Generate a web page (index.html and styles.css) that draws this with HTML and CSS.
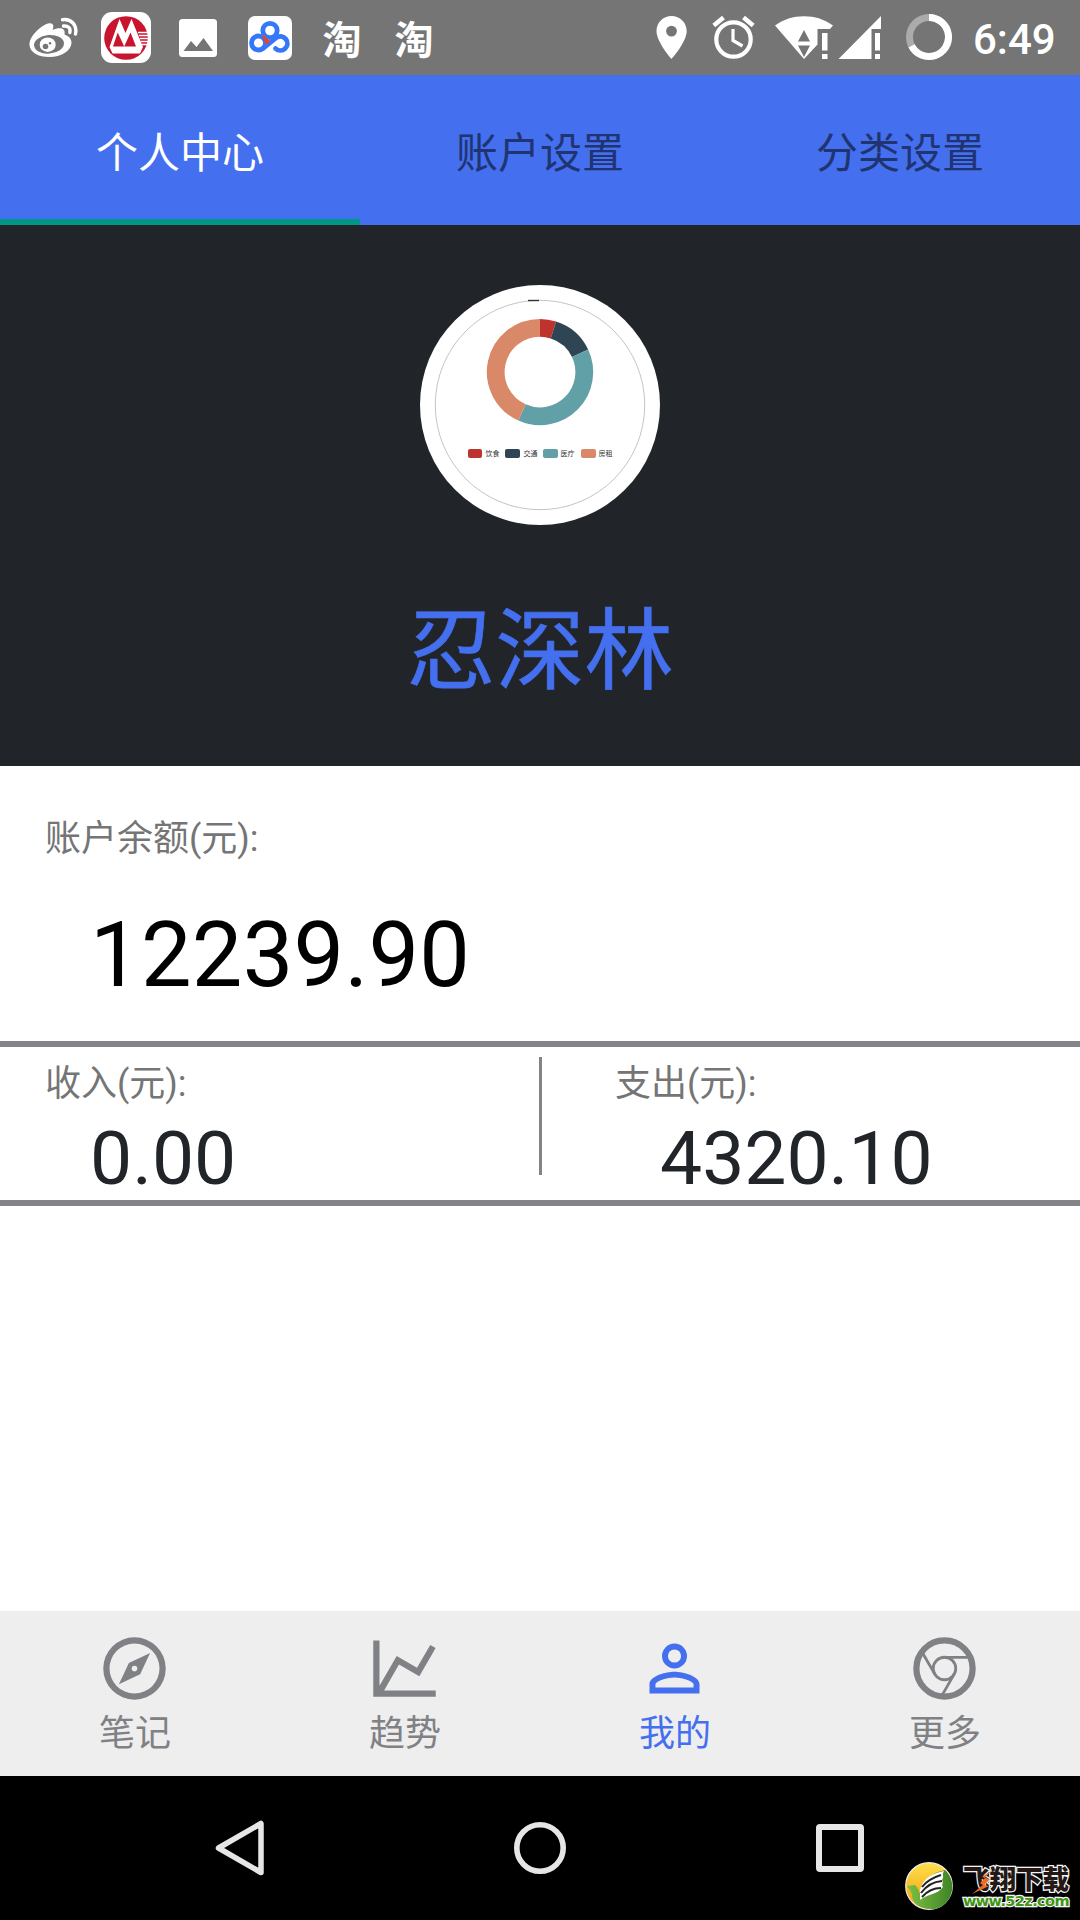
FILE: index.html
```html
<!DOCTYPE html>
<html lang="zh-CN">
<head>
    <meta charset="UTF-8">
    <meta name="viewport" content="width=device-width, initial-scale=1.0">
    <title>个人中心</title>
    <link rel="stylesheet" href="styles.css">
</head>
<body>
    <div class="screen">
        <header class="status-bar">
            <div class="notifications">
                <!-- weibo -->
                <svg viewBox="18 0 72 75">
                    <path fill="#fff" d="M29.500 45C29 37 40 26 48 23.500C53 22 54.500 25.500 52.500 30C59 27 66 27.500 64.500 34.500C69 36 71.500 39 71.500 43C71 51 61 57 49.500 57C38 57 30 52.500 29.500 45Z"/>
                    <ellipse cx="49" cy="44.300" rx="15" ry="9.300" fill="#757575" transform="rotate(-5 49 44.300)"/>
                    <ellipse cx="47.700" cy="44.700" rx="8" ry="7.200" fill="#fff"/>
                    <circle cx="45.500" cy="46.500" r="2.800" fill="#757575"/>
                    <circle cx="50" cy="43.300" r="1.200" fill="#757575"/>
                    <path fill="none" stroke="#fff" stroke-width="3.400" stroke-linecap="round" d="M62.500 19.700C71 18.500 77.500 25 75.500 34M63.500 26C68 25.500 71 28 69.800 32.500"/>
                </svg>
                <!-- bank -->
                <svg viewBox="90 0 72 75">
                    <rect x="101" y="12" width="50" height="51" rx="11" fill="#fff"/>
                    <circle cx="126" cy="38" r="21.800" fill="#c8152d"/>
                    <path fill="#fff" d="M119.500 19L125.500 33L131.500 19L143 47L140 53.500H112.500L109.500 47Z"/>
                    <path fill="#c8152d" d="M113 46.500L117.700 32.500L124.200 46.500L130.500 32.500L136 46.500Z"/>
                    <path stroke="#fff" stroke-width="1.300" d="M138 32.500H148M139 35.500H148M140 38.500H148M141 41.500H148M142 44.500H148"/>
                </svg>
                <!-- gallery -->
                <svg viewBox="162 0 72 75">
                    <rect x="179" y="19" width="38" height="38" rx="3.500" fill="#fff"/>
                    <path fill="#757575" d="M183.500 51L191 41L196.500 47L203.500 38L213 51Z"/>
                </svg>
                <!-- cloud disk -->
                <svg viewBox="234 0 72 75">
                    <rect x="248" y="16" width="44" height="44" rx="7" fill="#fff"/>
                    <g fill="none" stroke="#3478fa" stroke-width="4.800">
                        <circle cx="270" cy="30.500" r="7.200"/>
                        <circle cx="258.500" cy="43" r="7"/>
                        <path d="M263 48.500L276 38A7 7 0 1 1 275.500 48.500" stroke-linecap="round"/>
                    </g>
                    <path fill="#d8483c" d="M263.500 34.500L270.500 41.500L266 45L262.500 37.500Z"/>
                </svg>
                <span class="taobao">淘</span>
                <span class="taobao">淘</span>
            </div>
            <div class="system">
                <svg class="icon-pin" viewBox="656 0 32 75">
                    <path fill="#fff" fill-rule="evenodd" d="M671.500 16C663 16 656.500 22.700 656.500 31C656.500 42 671.500 59 671.500 59S686.700 42 686.700 31C686.700 22.700 680 16 671.500 16ZM671.500 25.700A5.400 5.400 0 1 1 671.500 36.500A5.400 5.400 0 0 1 671.500 25.700Z"/>
                </svg>
                <svg class="icon-alarm" viewBox="712 0 44 75">
                    <g fill="none" stroke="#fff">
                        <circle cx="733.500" cy="39.500" r="17.200" stroke-width="4.200"/>
                        <path stroke-width="3.200" d="M733 29V40.500L742.500 46"/>
                        <path stroke-width="4.500" d="M713.800 25.500L723.500 17.500M743.500 17.500L753.200 25.500"/>
                    </g>
                </svg>
                <svg class="icon-wifi" viewBox="774 0 60 75">
                    <path fill="#fff" d="M775 25.500C791 13 817 13 833 25.500L830 29H817.500V44.500L804 59Z"/>
                    <path fill="#757575" d="M798 41.500L804 30L810 41.500ZM798 45.500H810L804 57Z"/>
                    <path fill="#fff" d="M822 33H827.500V50.500H822ZM822 54H827.500V59H822Z"/>
                </svg>
                <svg class="icon-signal" viewBox="838 0 44 75">
                    <path fill="#fff" d="M881 16V29H871.500V59H838.500ZM875 33H880V50.500H875ZM875 54H880V59H875Z"/>
                </svg>
                <svg class="icon-ring" viewBox="905 0 48 75">
                    <circle cx="929" cy="37" r="19.500" fill="none" stroke="#ababab" stroke-width="7"/>
                    <path fill="none" stroke="#fff" stroke-width="7" d="M929 17.500A19.500 19.500 0 1 1 911.600 45.800"/>
                </svg>
                <span class="clock">6:49</span>
            </div>
        </header>

        <nav class="tabs">
            <a class="tab active">个人中心</a>
            <a class="tab">账户设置</a>
            <a class="tab">分类设置</a>
        </nav>

        <section class="profile">
            <div class="avatar">
                <svg viewBox="0 0 240 240">
                    <circle cx="120" cy="120" r="104.700" fill="none" stroke="#c4c4c4" stroke-width="1"/>
                    <path d="M108 15.500H119" stroke="#333" stroke-width="1.400"/>
                    <g fill="none" stroke-width="17.800">
                        <path stroke="#bf332e" d="M120 42.800A44.200 44.200 0 0 1 133.400 44.900"/>
                        <path stroke="#304553" d="M133.400 44.900A44.200 44.200 0 0 1 160.100 68.300"/>
                        <path stroke="#61a0a6" d="M160.100 68.300A44.200 44.200 0 0 1 102 127.400"/>
                        <path stroke="#d98868" d="M102 127.400A44.200 44.200 0 0 1 120 42.800"/>
                    </g>
                    <rect x="48" y="164" width="14" height="9" rx="2" fill="#bf332e"/>
                    <rect x="85" y="164" width="15" height="9" rx="2" fill="#304553"/>
                    <rect x="123" y="164" width="15" height="9" rx="2" fill="#61a0a6"/>
                    <rect x="161" y="164" width="15" height="9" rx="2" fill="#d98868"/>
                    <g class="legend">
                        <text x="65.500" y="171">饮食</text>
                        <text x="103.500" y="171">交通</text>
                        <text x="140.500" y="171">医疗</text>
                        <text x="178.500" y="171">房租</text>
                    </g>
                </svg>
            </div>
            <h1 class="username">忍深林</h1>
        </section>

        <section class="balance">
            <div class="label">账户余额(元):</div>
            <div class="amount">12239.90</div>
        </section>

        <section class="summary">
            <div class="income">
                <div class="label">收入(元):</div>
                <div class="value">0.00</div>
            </div>
            <div class="separator"></div>
            <div class="expense">
                <div class="label">支出(元):</div>
                <div class="value">4320.10</div>
            </div>
        </section>

        <nav class="bottom-nav">
            <a class="nav-item">
                <svg viewBox="0 0 24 24"><path d="M7 17L10.200 10.200L17 7L13.800 13.800L7 17M12 11.100A.9.9 0 0 0 11.100 12A.9.9 0 0 0 12 12.900A.9.9 0 0 0 12.900 12A.9.9 0 0 0 12 11.100M12 2A10 10 0 0 1 22 12A10 10 0 0 1 12 22A10 10 0 0 1 2 12A10 10 0 0 1 12 2M12 4A8 8 0 0 0 4 12A8 8 0 0 0 12 20A8 8 0 0 0 20 12A8 8 0 0 0 12 4Z"/></svg>
                <span>笔记</span>
            </a>
            <a class="nav-item">
                <svg viewBox="0 0 24 24"><path d="M16 11.780L20.240 4.450L21.970 5.450L16.740 14.500L10.230 10.750L5.460 19H22V21H2V3H4V17.540L9.500 8L16 11.780Z"/></svg>
                <span>趋势</span>
            </a>
            <a class="nav-item active">
                <svg viewBox="0 0 24 24"><path d="M12 13C9.330 13 4 14.330 4 17V20H20V17C20 14.330 14.670 13 12 13M12 4A4 4 0 0 0 8 8A4 4 0 0 0 12 12A4 4 0 0 0 16 8A4 4 0 0 0 12 4M12 14.900C14.970 14.900 18.100 16.360 18.100 17V18.100H5.900V17C5.900 16.360 9 14.900 12 14.900M12 5.900A2.100 2.100 0 0 1 14.100 8A2.100 2.100 0 0 1 12 10.100A2.100 2.100 0 0 1 9.900 8A2.100 2.100 0 0 1 12 5.900Z"/></svg>
                <span>我的</span>
            </a>
            <a class="nav-item">
                <svg class="outline" viewBox="0 0 24 24">
                    <circle cx="12" cy="12" r="9" stroke-width="2"/>
                    <circle cx="12" cy="12" r="3.600"/>
                    <path d="M12 8.450H20M15.100 13.800L11.200 20.600M8.900 13.800L4.900 6.900"/>
                </svg>
                <span>更多</span>
            </a>
        </nav>

        <footer class="system-nav">
            <svg viewBox="0 0 60 60"><path d="M51 5.500V54.500L8.500 30Z" stroke-width="5.500" stroke-linejoin="round"/></svg>
            <svg viewBox="0 0 60 60"><circle cx="30" cy="30" r="23.200" stroke-width="5.600"/></svg>
            <svg viewBox="0 0 60 60"><rect x="9" y="9" width="42" height="42" rx="1" stroke-width="6"/></svg>

            <div class="watermark">
                <svg viewBox="0 0 48 48">
                    <defs>
                        <linearGradient id="sun" x1="0" y1="0" x2="0" y2="1">
                            <stop offset="0" stop-color="#ffe04a"/>
                            <stop offset="1" stop-color="#f39a12"/>
                        </linearGradient>
                        <linearGradient id="leaf" x1="0" y1="0" x2="1" y2="0">
                            <stop offset="0" stop-color="#7cc142"/>
                            <stop offset="1" stop-color="#3f8427"/>
                        </linearGradient>
                    </defs>
                    <circle cx="24" cy="24" r="23.300" fill="url(#sun)" stroke="#eee" stroke-width="1.200"/>
                    <path fill="url(#leaf)" d="M40 8C53 20 48 43 30 47C16 48 7 41 7 34C7 29 2 25 2 24L10 23C15 28 13 31 15 31C16 20 25 11 40 8Z"/>
                    <path fill="#fff" d="M15 28C18 16 28 11 39 9C36 15 40 12 37 18C39 20 36 23 38 25C32 33 24 31 15 38Z"/>
                    <path fill="none" stroke="#222" stroke-width="2" d="M17 25Q23 17 36 13M16 31Q24 20 37 19M17 35Q25 26 36 26"/>
                </svg>
                <div class="watermark-text">
                    <span class="site-name">飞翔下载</span>
                    <span class="site-url">www.52z.com</span>
                </div>
                <svg class="spark" viewBox="0 0 24 26"><path fill="#f36b21" d="M20 2L14 9L19 10L13 16L18 17L1 25L12 16L9 14L14 9L11 8Z"/></svg>
            </div>
        </footer>
    </div>
</body>
</html>
```

FILE: styles.css
```css
:root {
    --primary-color: #446fee;
    --dark-color: #212529;
    --line-color: #838488;
    --label-color: #757575;
    --icon-color: #808185;
}

* {
    margin: 0;
    padding: 0;
    box-sizing: border-box;
}

body {
    background-color: white;
    font-family: Roboto, "Noto Sans CJK SC", sans-serif;
}

svg {
    display: block;
}

.screen {
    display: flex;
    flex-direction: column;
    width: 1080px;
    height: 1920px;
    overflow: hidden;
}

/* Status bar */
.status-bar {
    display: flex;
    justify-content: space-between;
    height: 75px;
    padding: 0 24px 0 18px;
    background-color: #757575;
    color: white;
}

.notifications {
    display: flex;
}

.notifications svg {
    width: 72px;
    height: 75px;
}

.taobao {
    width: 72px;
    font-family: "Noto Sans CJK SC", sans-serif;
    font-size: 39px;
    font-weight: 700;
    line-height: 75px;
    text-align: center;
}

.system {
    display: flex;
}

.system svg {
    height: 75px;
}

.icon-pin {
    width: 32px;
    margin-right: 24px;
}

.icon-alarm {
    width: 44px;
    margin-right: 18px;
}

.icon-wifi {
    width: 60px;
    margin-right: 4px;
}

.icon-signal {
    width: 44px;
    margin-right: 23px;
}

.icon-ring {
    width: 48px;
    margin-right: 20px;
}

.clock {
    width: 83px;
    font-size: 42px;
    font-weight: 500;
    line-height: 80px;
    white-space: nowrap;
}

/* Top tabs */
.tabs {
    display: flex;
    height: 150px;
    background-color: var(--primary-color);
}

.tab {
    flex: 1;
    border-bottom: 6px solid transparent;
    color: #203471;
    font-size: 42px;
    line-height: 157px;
    text-align: center;
}

.tab.active {
    border-bottom-color: #009688;
    color: white;
}

/* Profile */
.profile {
    display: flex;
    flex-direction: column;
    align-items: center;
    height: 541px;
    padding-top: 60px;
    background-color: var(--dark-color);
}

.avatar {
    width: 240px;
    height: 240px;
    border-radius: 50%;
    background-color: white;
}

.legend {
    fill: #333;
    font-size: 7px;
}

.username {
    margin-top: 62px;
    color: var(--primary-color);
    font-size: 89px;
    font-weight: 400;
    line-height: 130px;
    -webkit-text-stroke: 0.7px var(--primary-color);
}

/* Money */
.label {
    color: var(--label-color);
    font-size: 36px;
    line-height: 48px;
}

.balance {
    height: 281px;
    padding: 49px 45px 0;
    border-bottom: 6px solid var(--line-color);
}

.amount {
    padding: 40px 0 0 45px;
    color: black;
    font-size: 90px;
    letter-spacing: 0.3px;
    line-height: 106px;
}

.summary {
    display: flex;
    height: 159px;
    border-bottom: 6px solid var(--line-color);
}

.income,
.expense {
    width: 538.5px;
    padding-top: 13px;
}

.income {
    padding-left: 45px;
}

.expense {
    padding-left: 73.5px;
}

.separator {
    width: 3px;
    height: 118px;
    margin-top: 10px;
    background-color: var(--line-color);
}

.value {
    padding: 6px 0 0 45px;
    color: var(--dark-color);
    font-size: 75px;
    line-height: 88px;
}

/* Bottom navigation */
.bottom-nav {
    display: flex;
    height: 165px;
    margin-top: auto;
    background-color: #eeeeee;
}

.nav-item {
    display: flex;
    flex: 1;
    flex-direction: column;
    align-items: center;
    padding-top: 20px;
    color: var(--icon-color);
    font-size: 36px;
    line-height: 56px;
}

.nav-item.active {
    color: var(--primary-color);
}

.nav-item svg {
    width: 75px;
    height: 75px;
    margin-right: 1px;
    fill: currentColor;
}

.nav-item .outline {
    fill: none;
    stroke: currentColor;
    stroke-width: 0.9;
}

.system-nav {
    position: relative;
    display: flex;
    justify-content: center;
    align-items: center;
    gap: 240px;
    height: 144px;
    background-color: black;
}

.system-nav > svg {
    width: 60px;
    height: 60px;
    fill: none;
    stroke: #e6e6e6;
}

/* Watermark lies over the system bar */
.watermark {
    position: absolute;
    right: 8px;
    bottom: 8px;
    display: flex;
    gap: 10px;
    width: 167px;
    height: 50px;
}

.watermark > svg {
    width: 48px;
    height: 48px;
}

.watermark-text {
    display: flex;
    flex-direction: column;
    white-space: nowrap;
    paint-order: stroke fill;
    -webkit-text-stroke: 2.5px #f4f4f4;
}

.site-name {
    color: #231815;
    font-family: "Noto Sans CJK SC", sans-serif;
    font-size: 26.5px;
    font-weight: 900;
    line-height: 32px;
}

.site-url {
    color: #3f9414;
    font-family: "DejaVu Sans", sans-serif;
    font-size: 14.5px;
    font-weight: 700;
    letter-spacing: -0.6px;
    line-height: 15px;
}

.watermark > .spark {
    position: absolute;
    left: 66px;
    top: 7px;
    width: 24px;
    height: 26px;
}
```
